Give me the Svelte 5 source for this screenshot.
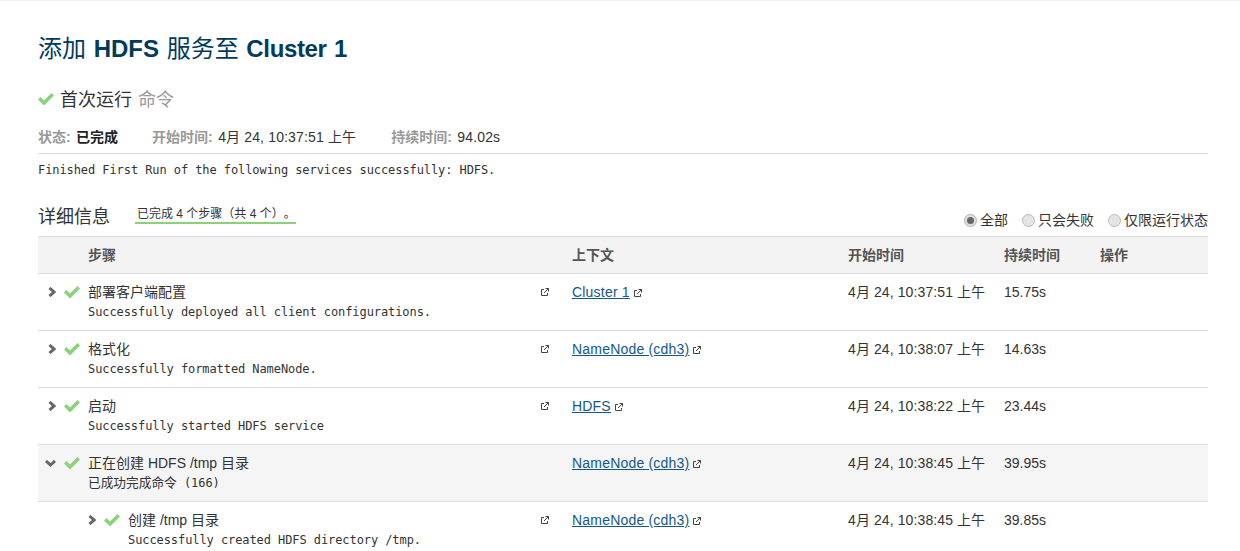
<script>
  const steps = [
    { name: '部署客户端配置', desc: 'Successfully deployed all client configurations.', ctx: 'Cluster 1', start: '4月 24, 10:37:51 上午', dur: '15.75s' },
    { name: '格式化', desc: 'Successfully formatted NameNode.', ctx: 'NameNode (cdh3)', start: '4月 24, 10:38:07 上午', dur: '14.63s' },
    { name: '启动', desc: 'Successfully started HDFS service', ctx: 'HDFS', start: '4月 24, 10:38:22 上午', dur: '23.44s' },
    { name: '正在创建 HDFS /tmp 目录', cn: '已成功完成命令', desc: ' (166)', ctx: 'NameNode (cdh3)', start: '4月 24, 10:38:45 上午', dur: '39.95s', open: true },
    { name: '创建 /tmp 目录', desc: 'Successfully created HDFS directory /tmp.', ctx: 'NameNode (cdh3)', start: '4月 24, 10:38:45 上午', dur: '39.85s', child: true },
  ];
</script>

{#snippet check()}
  <svg class="check" viewBox="0 0 16 13" width="16" height="13"><path d="M0 6.500 2.500 4 6 7.500 13.500 0 16 2.500 6 12.500Z" fill="#8ad27a" /></svg>
{/snippet}

{#snippet ext()}
  <svg class="ext" viewBox="0 0 8 8" width="8" height="8"><path d="M3 1.500H.5v6h6V5M4.500 .5h3v3M7.500 .5 3 5" fill="none" stroke="#444" stroke-width="1" /></svg>
{/snippet}

<main>
  <h1>添加 <b>HDFS</b> 服务至 <b class="cluster">Cluster 1</b></h1>

  <h2>{@render check()}<span>首次运行</span> <em>命令</em></h2>

  <div class="meta">
    <span><i>状态:</i> <b>已完成</b></span>
    <span><i>开始时间:</i> <span class="val">4月 24, 10:37:51 上午</span></span>
    <span class="total"><i>持续时间:</i> <span class="val">94.02s</span></span>
  </div>
  <pre class="result">Finished First Run of the following services successfully: HDFS.</pre>

  <div class="details">
    <h3>详细信息</h3>
    <div class="progress">已完成 4 个步骤（共 4 个）。</div>
    <div class="filters">
      <label><span class="radio on"></span>全部</label>
      <label><span class="radio"></span>只会失败</label>
      <label><span class="radio"></span>仅限运行状态</label>
    </div>
  </div>

  <div class="row head">
    <div></div>
    <div>步骤</div>
    <div>上下文</div>
    <div>开始时间</div>
    <div>持续时间</div>
    <div>操作</div>
  </div>

  {#each steps as s}
    <div class="row" class:open={s.open}>
      <div class="icons" class:child={s.child}>
        <span class="caret">
          {#if s.open}
            <svg viewBox="0 0 11 7" width="11" height="7"><path d="M1 1 5.500 5 10 1" fill="none" stroke="#666" stroke-width="3" /></svg>
          {:else}
            <svg viewBox="0 0 8 10" width="8" height="10"><path d="M1.500 1 6 5 1.500 9" fill="none" stroke="#666" stroke-width="3" /></svg>
          {/if}
        </span>
        {@render check()}
      </div>
      <div class="step" class:child={s.child}>
        <div class="name">
          <span>{s.name}</span>
          {#if !s.open}{@render ext()}{/if}
        </div>
        <div class="desc">{#if s.cn}<span class="cn">{s.cn}</span>{/if}{s.desc}</div>
      </div>
      <div><a href="#top">{s.ctx}</a> {@render ext()}</div>
      <div class="when">{s.start}</div>
      <div>{s.dur}</div>
      <div></div>
    </div>
  {/each}
</main>

<style>
  :global(body) {
    margin: 0;
    background: #fff;
  }

  main {
    height: 551px;
    overflow: hidden;
    box-sizing: border-box;
    padding: 0 32px 0 38px;
    font-family: "Liberation Sans", "Noto Sans CJK SC", sans-serif;
    font-size: 14px;
    color: #333;
    border-top: 1px solid #f2f2f2;
  }

  h1 {
    margin: 0;
    padding-top: 32px;
    font-size: 24px;
    line-height: 32px;
    font-weight: 400;
    word-spacing: 1px;
    color: #003b5c;
  }

  h1 b {
    font-weight: 700;
  }

  .cluster {
    letter-spacing: -.35px;
  }

  h2 {
    display: flex;
    align-items: center;
    gap: 6px;
    margin: 23px 0 0;
    font-size: 18px;
    line-height: 24px;
    font-weight: 400;
    color: #333;
  }

  h2 em {
    font-style: normal;
    color: #999;
  }

  h2 .check {
    margin-top: -2px;
  }

  .meta {
    display: flex;
    gap: 34px;
    margin-top: 15px;
    padding-bottom: 6px;
    line-height: 20px;
    border-bottom: 1px solid #ddd;
  }

  .meta i {
    margin-right: 1.500px;
    font-style: normal;
    font-weight: 700;
    color: #999;
  }

  .meta b {
    font-weight: 700;
    color: #222;
  }

  .meta .total {
    margin-left: 1px;
  }

  .val {
    letter-spacing: .15px;
  }

  pre {
    margin: 0;
    font-family: "DejaVu Sans Mono", "Noto Sans CJK SC", monospace;
    font-size: 12px;
    letter-spacing: -.08px;
  }

  .result {
    margin-top: 8px;
    line-height: 16px;
  }

  .details {
    display: flex;
    align-items: flex-end;
    margin-top: 22px;
    height: 36px;
  }

  h3 {
    margin: 0 25px 7px 0;
    font-size: 18px;
    line-height: 24px;
    font-weight: 400;
  }

  .progress {
    margin-bottom: 12px;
    padding: 0 0 0 2px;
    font-size: 12px;
    line-height: 15px;
    text-spacing-trim: space-all;
    border-bottom: 2px solid #8ad27a;
  }

  .filters {
    display: flex;
    gap: 14px;
    margin-left: auto;
    margin-bottom: 6px;
    line-height: 20px;
  }

  label {
    display: flex;
    align-items: center;
    gap: 3px;
  }

  .radio {
    box-sizing: border-box;
    width: 13px;
    height: 13px;
    border: 1px solid #bbb;
    border-radius: 50%;
    background: #e4e4e4;
  }

  .radio.on {
    border: 3px solid #ddd;
    background: #666;
    outline: 1px solid #bbb;
    outline-offset: -1px;
  }

  .row {
    display: grid;
    grid-template-columns: 50px 484px 276px 156px 96px 108px;
    height: 57px;
    box-sizing: border-box;
    padding-top: 8px;
    line-height: 20px;
    border-bottom: 1px solid #ddd;
  }

  .row.head {
    height: 38px;
    padding-top: 8px;
    background: #f3f3f3;
    border-top: 1px solid #ddd;
    font-weight: 700;
    color: #555;
  }

  .row.open {
    background: #f5f5f5;
  }

  .icons {
    display: flex;
    align-items: center;
    align-self: start;
    height: 20px;
    padding-left: 7px;
    gap: 8px;
  }

  .icons.child {
    padding-left: 47px;
  }

  .caret {
    display: flex;
    flex-shrink: 0;
    justify-content: flex-end;
    width: 11px;
  }

  .check {
    flex-shrink: 0;
  }

  .name {
    display: flex;
    align-items: center;
    justify-content: space-between;
    padding-right: 23px;
  }

  .desc {
    font-family: "DejaVu Sans Mono", "Noto Sans CJK SC", monospace;
    font-size: 12px;
    letter-spacing: -.08px;
    line-height: 20px;
    white-space: pre;
  }

  .cn {
    font-size: 12.700px;
    letter-spacing: 0;
  }

  .step.child {
    padding-left: 40px;
  }

  a {
    color: #14588a;
    text-decoration: underline;
    letter-spacing: .2px;
  }

  .when {
    letter-spacing: .1px;
  }
</style>
